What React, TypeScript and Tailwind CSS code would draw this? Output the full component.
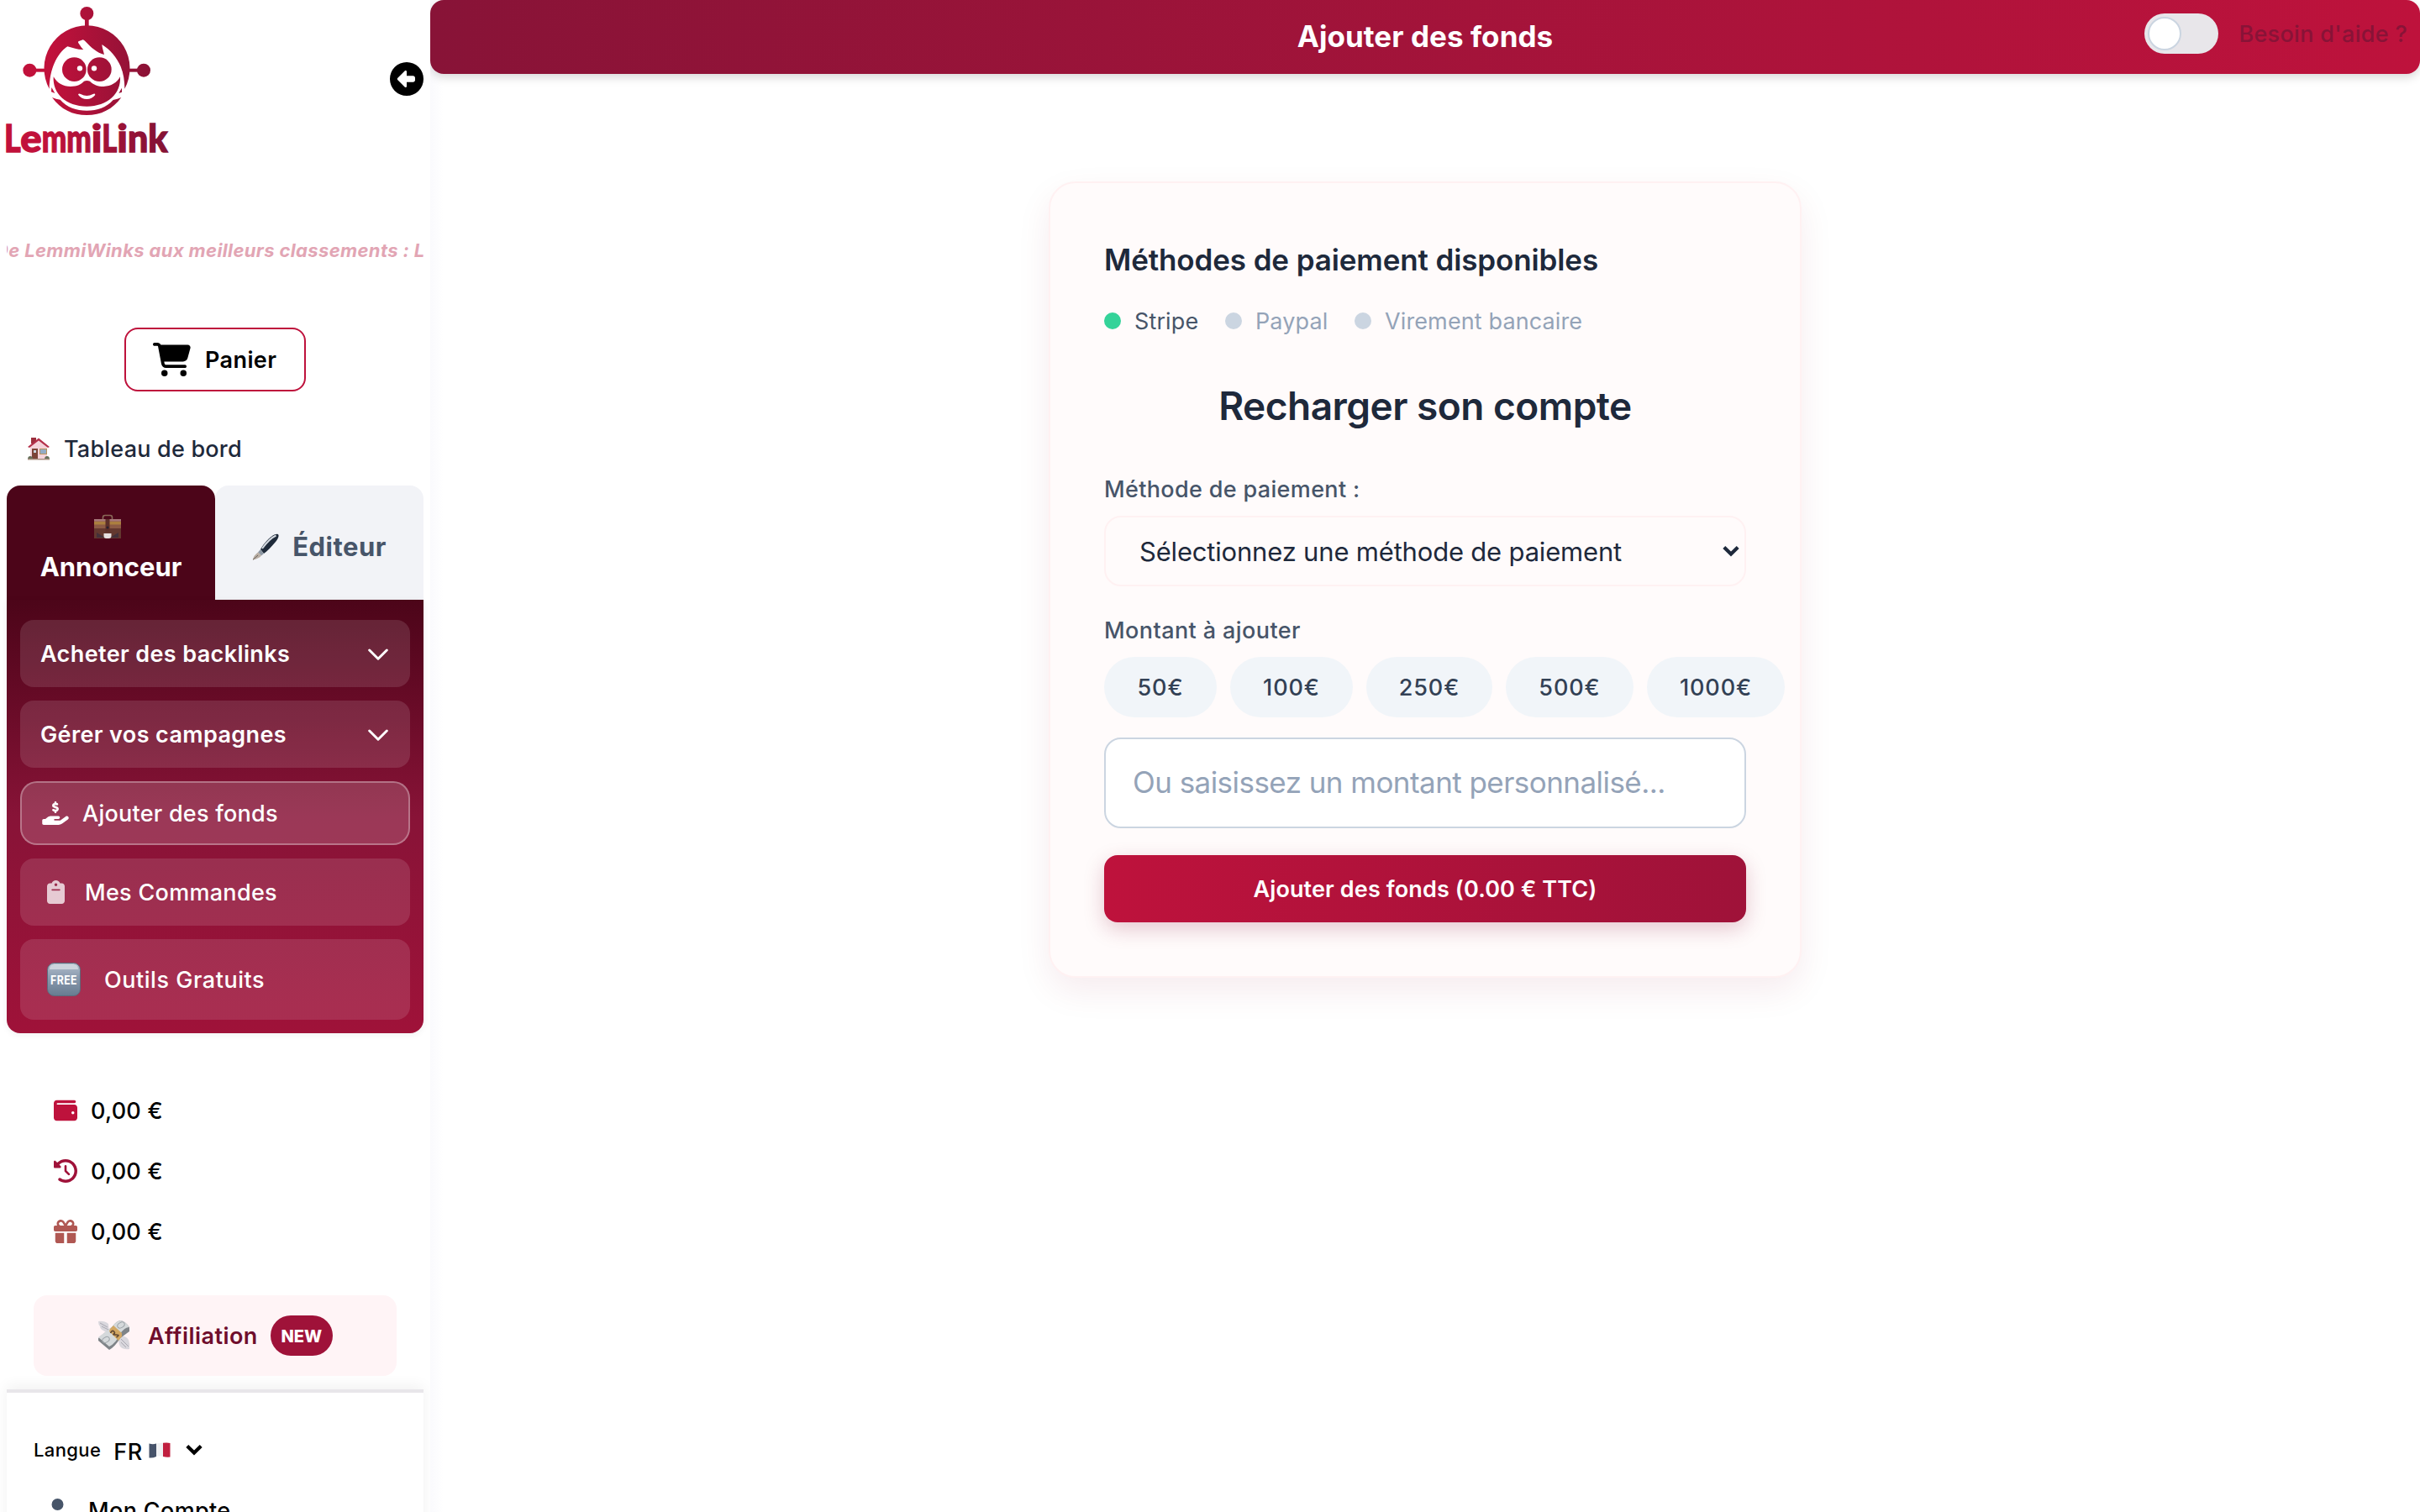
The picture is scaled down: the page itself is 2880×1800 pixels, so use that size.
import React, { ReactNode, useState } from 'react';
import {
  FaCartShopping,
  FaCircleLeft,
  FaClipboard,
  FaClockRotateLeft,
  FaGift,
  FaHandHoldingDollar,
  FaUser,
  FaWallet,
} from 'react-icons/fa6';

const amounts = [
  { value: 50, width: 'w-[134px]' },
  { value: 100, width: 'w-[146px]' },
  { value: 250, width: 'w-[150px]' },
  { value: 500, width: 'w-[152px]' },
  { value: 1000, width: 'w-[164px]' },
];

// lettres du logo : texte, position x, largeur
const wordmark: [string, number, number][] = [
  ['L', 15, 59],
  ['e', 73, 76],
  ['mm', 149, 177],
  ['i', 326, 38],
  ['L', 364, 54],
  ['i', 418, 38],
  ['n', 456, 73],
  ['k', 529, 70],
];

function Logo() {
  return (
    <svg className="h-44 w-48 shrink-0 overflow-visible" viewBox="24 24 576 528">
      <defs>
        <linearGradient id="brand" gradientUnits="userSpaceOnUse" x1="180" y1="0" x2="560" y2="0">
          <stop offset="0" stopColor="#c1113b" />
          <stop offset="1" stopColor="#861235" />
        </linearGradient>
      </defs>
      <g fill="url(#brand)">
        {/* antennes */}
        <circle cx="310" cy="48" r="24" />
        <path d="M303 66h14v34h-14z" />
        <circle cx="106" cy="251" r="24" />
        <path d="M126 245h34v12h-34z" />
        <circle cx="513" cy="251" r="24" />
        <path d="M460 245h34v12h-34z" />
        {/* casque et mèche */}
        <path d="M176 317A153 153 0 1 1 445 317C445 290 441 262 431 238C417 205 393 177 364 159C365 171 369 182 372 195C346 189 326 170 304 147Q298 140 292 143L280 148Q277 151 281 155C287 163 291 171 298 177C280 178 261 172 241 166C201 193 177 250 176 317Z" />
        {/* yeux */}
        <circle cx="265" cy="248" r="43" />
        <circle cx="355" cy="248" r="43" />
        {/* visage */}
        <path d="M191 274C205 298 225 309 252 309C276 308 290 301 300 290Q310 286 321 290C333 302 350 309 370 309C397 308 418 295 429 274C433 335 384 380 310 380C236 380 187 335 191 274Z" />
        <path d="M184 312L196 333L183 328Z" />
        <path d="M435 314L424 333L435 329Z" />
        <path d="M186 348Q200 354 215 356C240 384 272 395 310 395C349 395 379 384 404 357Q420 354 433 348C402 391 360 411 310 411C259 411 217 391 186 348Z" />
      </g>
      <g fill="#fff">
        <circle cx="285" cy="244" r="9.5" />
        <circle cx="336" cy="244" r="9.5" />
        <path d="M279 338Q281 332 288 336Q310 348 332 336Q339 332 340 339Q328 354 310 354Q291 354 279 338Z" />
      </g>
      <g fill="url(#brand)" stroke="url(#brand)" strokeWidth="4" fontSize="135" fontWeight="900" className="font-[Lato,sans-serif]">
        {wordmark.map(([text, x, width]) => (
          <text key={x} x={x} y="543" textLength={width} lengthAdjust="spacingAndGlyphs">
            {text}
          </text>
        ))}
      </g>
    </svg>
  );
}

function HouseIcon() {
  return (
    <svg className="h-7 w-7" viewBox="0 0 28 28">
      <path d="M5 1h6v7H5z" fill="#9c2f3d" />
      <path d="M4 11L14 2l10 9v15H4z" fill="#f4d3da" />
      <path d="M1 12L14 1.500 27 12l-2 1L14 4.500 3 13z" fill="#b4304a" />
      <path d="M6 14h7v12H6z" fill="#7c4438" />
      <path d="M8 16h3v3H8z" fill="#c9d4dd" />
      <path d="M15 14h9v7h-9z" fill="#b9945c" />
      <path d="M16 15h7v5h-7z" fill="#93acc6" />
      <path d="M1 27q0-4 3-4t3 4zM21 27q0-4 3-4t3 4z" fill="#66705a" />
      <path d="M1 26h26v1.500H1z" fill="#a88f80" />
    </svg>
  );
}

function BriefcaseIcon() {
  return (
    <svg className="h-8 w-8" viewBox="0 0 32 32">
      <path d="M10.500 6.500V4q0-2.500 2.500-2.500h6q2.500 0 2.500 2.500v2.500" fill="none" stroke="#8a6a58" strokeWidth="1.600" />
      <path d="M0 6h32v23H0z" fill="#63382f" />
      <path d="M0 6h32v11H0z" fill="#8c5b45" />
      <path d="M0 6h32v2.500H0z" fill="#a8797a" />
      <path d="M0 9h32v3.500H0z" fill="#ab7f3f" />
      <path d="M13.500 6h5v15h-5z" fill="#5c2f29" />
      <path d="M3 22l10 6H3zM29 22l-10 6h10z" fill="#43303a" />
      <path d="M11.500 23h9v3q0 3-3 3h-3q-3 0-3-3z" fill="#e6e0e0" />
      <circle cx="16" cy="16" r="1.500" fill="#2a2230" />
    </svg>
  );
}

function PenIcon() {
  return (
    <svg className="h-8 w-8" viewBox="0 0 32 32">
      <path d="M10 19C14 12 21 4 27 1.300Q31 0 31.500 2Q32 5 28 10C23 16 18 21 14 24Z" fill="#1f2a3a" />
      <path d="M12 18C17 11 23 5 28.500 2.500" fill="none" stroke="#d5dae1" strokeWidth="2" />
      <path d="M10 19l4 5-3 2.500-4-4z" fill="#8d97a3" />
      <path d="M7 22.500l4 4Q8 30 .8 31.500Q2 26 7 22.500Z" fill="#b9aea4" />
      <path d="M1 31.300L7 26" stroke="#6b625c" strokeWidth="1" />
    </svg>
  );
}

function FreeIcon() {
  return (
    <svg className="h-10 w-10" viewBox="0 0 40 40">
      <defs>
        <linearGradient id="free" x1="0" y1="0" x2="0" y2="1">
          <stop offset="0" stopColor="#b4bfcc" />
          <stop offset=".4" stopColor="#8d9db1" />
          <stop offset="1" stopColor="#677b90" />
        </linearGradient>
      </defs>
      <rect x=".5" y=".5" width="39" height="39" rx="8" fill="url(#free)" stroke="#5b6b7c" />
      <path d="M3 8q0-6 6-6h22q6 0 6 6z" fill="#ccd4dd" />
      <text x="4" y="25.500" textLength="32" lengthAdjust="spacingAndGlyphs" fontSize="15" fontWeight="700" fill="#fff" className="font-[Inter,sans-serif]">
        FREE
      </text>
    </svg>
  );
}

function MoneyIcon() {
  return (
    <svg className="h-10 w-10" viewBox="0 0 40 40">
      <path d="M1 3q7-1 12 3l1 9q-4 2-7-1-4-2-4-5-2-2-2-6z" fill="#d9d7dd" />
      <path d="M3 5l9 5M5 9l8 4" stroke="#aaa8b2" strokeWidth="1" />
      <path d="M26 20q8 0 11 5 2 5 1 11-7 1-11-3-3-5-1-13z" fill="#d9d7dd" />
      <path d="M28 24l9 9M28 28l6 6" stroke="#aaa8b2" strokeWidth="1" />
      <path d="M1 23L18 9Q23 2 28 2q5 1 10 8v5L27 23Q21 33 14 37L1 26z" fill="#7f8488" />
      <path d="M1 22L18 9Q23 2 28 2q5 1 10 8-6 0-11 8-5 11-13 15z" fill="#d5d9db" />
      <ellipse cx="28" cy="7.500" rx="4.500" ry="3" fill="none" stroke="#9da3a8" transform="rotate(-30 28 7.500)" />
      <ellipse cx="10" cy="25" rx="4.500" ry="3" fill="none" stroke="#9da3a8" transform="rotate(-30 10 25)" />
      <path d="M15 12l4-4 10 9v4l-4 5-11-11z" fill="#d2a763" />
      <path d="M15.500 17q2-4 4-2t0 3 3 1 0 3" fill="none" stroke="#5f4632" strokeWidth="1.600" />
    </svg>
  );
}

function FlagIcon() {
  return (
    <svg className="h-[19px] w-[26px]" viewBox="0 0 26 19">
      <path d="M.5 1.500Q5 3 9 1.500V17Q5 19 .5 18.500Z" fill="#46536a" />
      <path d="M9 1.500Q13 .5 17 .8V17Q13 15.500 9 17Z" fill="#f0f1f3" />
      <path d="M17 .8Q22 0 25.500 1V17.500Q21 18 17 17Z" fill="#c01f3f" />
    </svg>
  );
}

function Chevron() {
  return (
    <svg className="h-4 w-6" viewBox="0 0 24 16" fill="none" stroke="#fff" strokeWidth="3" strokeLinecap="round" strokeLinejoin="round">
      <path d="M1.700 3L12 13.200 22.300 3" />
    </svg>
  );
}

function SelectArrow() {
  return (
    <svg className="h-3.5 w-5" viewBox="0 0 20 14" fill="none" stroke="currentColor" strokeWidth="4.200">
      <path d="M1.800 2.500L10 10.500 18.200 2.500" />
    </svg>
  );
}

function Balance({ icon }: { icon: ReactNode }) {
  return (
    <div className="flex h-[72px] items-center gap-4 pl-14 text-[27px] font-medium tracking-[0.25px] text-black">
      {icon}
      <span className="pt-0.5">0,00 €</span>
    </div>
  );
}

function Sidebar() {
  return (
    <aside className="relative flex h-full w-[512px] shrink-0 flex-col overflow-hidden bg-white px-2 pt-2">
      <div className="flex shrink-0 justify-between">
        <Logo />
        <FaCircleLeft className="mt-[66px] h-10 w-10 text-black" />
      </div>

      <div className="mt-[98px] h-8 shrink-0 overflow-hidden whitespace-nowrap">
        <p className="-ml-3.5 text-[22px] leading-8 font-bold tracking-[0.37px] text-[#e2a5b4] italic">
          De LemmiWinks aux meilleurs classements : L
        </p>
      </div>

      <button className="mt-[76px] flex h-[76px] w-[216px] shrink-0 items-center gap-4 self-center rounded-2xl border-2 border-[#be123c] pl-8 text-[27px] font-semibold tracking-[0.4px] text-black">
        <FaCartShopping className="h-10 w-[45px]" />
        <span className="pt-0.5 pl-px">Panier</span>
      </button>

      <a className="mt-10 flex h-14 shrink-0 items-center gap-4 pl-6 text-[27px] font-medium tracking-[0.21px] text-[#1e293b]">
        <HouseIcon />
        <span className="pt-0.5">Tableau de bord</span>
      </a>

      <div className="mt-4 flex h-[136px] shrink-0 bg-white text-[31px] leading-[48px] font-bold">
        <button className="flex flex-1 flex-col items-center justify-center rounded-t-2xl bg-[#4c0519] pt-[10px] text-white">
          <span className="flex h-12 items-center pt-0.5 pr-2">
            <BriefcaseIcon />
          </span>
          Annonceur
        </button>
        <button className="flex flex-1 items-center justify-center gap-4 rounded-t-2xl bg-[#f2f3f7] pt-[9px] tracking-[0.5px] text-[#475569]">
          <PenIcon />
          Éditeur
        </button>
      </div>

      <nav className="flex shrink-0 flex-col gap-4 rounded-b-2xl bg-linear-to-b from-[#4c0519] via-[#881337] to-[#9f1239] px-4 pt-6 pb-4 text-[27px] text-white shadow-[0_2px_8px_rgba(0,0,0,0.06)]">
        <button className="flex h-20 items-center justify-between rounded-2xl bg-white/12 pt-0.5 pr-[26px] pl-6 font-semibold tracking-[0.38px]">
          Acheter des backlinks
          <Chevron />
        </button>
        <button className="flex h-20 items-center justify-between rounded-2xl bg-white/12 pt-0.5 pr-[26px] pl-6 font-semibold tracking-[0.38px]">
          Gérer vos campagnes
          <Chevron />
        </button>
        <a className="flex h-[76px] items-center gap-4 rounded-[20px] border-2 border-white/30 bg-white/16 pl-6 font-medium tracking-[0.25px]">
          <FaHandHoldingDollar className="h-7 w-8" />
          <span className="pt-0.5">Ajouter des fonds</span>
        </a>
        <a className="flex h-20 items-center gap-6 rounded-2xl bg-white/12 pl-8 font-medium tracking-[0.3px]">
          <FaClipboard className="h-7 w-[21px] text-white/75" />
          <span className="pt-0.5">Mes Commandes</span>
        </a>
        <a className="flex h-24 items-center gap-7 rounded-2xl bg-white/12 pl-8 font-medium tracking-[0.54px]">
          <FreeIcon />
          <span className="pt-0.5">Outils Gratuits</span>
        </a>
      </nav>

      <div className="mt-14 flex shrink-0 flex-col">
        <Balance icon={<FaWallet className="h-7 w-7 text-[#be123c]" />} />
        <Balance icon={<FaClockRotateLeft className="h-7 w-7 text-[#9f1239]" />} />
        <Balance icon={<FaGift className="h-7 w-7 text-[#b05853]" />} />
      </div>

      <a className="mx-8 mt-10 flex h-24 shrink-0 items-center rounded-2xl bg-[#fff4f6] pl-[76px] text-[27px] font-semibold tracking-[0.46px] text-[#6f0d2c]">
        <MoneyIcon />
        <span className="ml-5 pt-0.5">Affiliation</span>
        <span className="ml-[15px] flex h-12 w-[74px] items-center justify-center rounded-full bg-[#9f1239] pt-0.5 text-[20px] font-extrabold tracking-normal text-white">
          NEW
        </span>
      </a>

      <div className="mt-4 shrink-0 border-t-4 border-[#e8e6ea] bg-white pt-10 shadow-[0_-4px_16px_rgba(0,0,0,0.06)]">
        <div className="flex h-14 items-center pl-8 font-medium text-black">
          <span className="text-[22px] tracking-[0.39px]">Langue</span>
          <button className="ml-[15px] flex items-center pt-1.5 text-[27px] tracking-[0.6px]">
            FR
            <span className="ml-[7px] pb-1.5">
              <FlagIcon />
            </span>
            <span className="ml-[18px] pb-1.5">
              <SelectArrow />
            </span>
          </button>
        </div>
        <a className="mt-4 flex h-14 items-center gap-6 pl-12 text-[27px] font-medium tracking-[0.36px] text-black">
          <FaUser className="h-7 w-[25px] text-[#475569]" />
          <span className="pt-0.5">Mon Compte</span>
        </a>
      </div>
    </aside>
  );
}

function Method({ label, active, className }: { label: string; active?: boolean; className?: string }) {
  return (
    <span className={`flex items-center gap-4 whitespace-nowrap ${className || ''} ${active ? 'text-[#475569]' : 'text-[#94a3b8]'}`}>
      <span className={`h-5 w-5 shrink-0 rounded-full ${active ? 'bg-[#34d399]' : 'bg-[#cbd5e1]'}`} />
      <span className="pt-0.5">{label}</span>
    </span>
  );
}

export default function App() {
  const [amount, setAmount] = useState('');
  const total = (parseFloat(amount) || 0).toFixed(2);

  return (
    <div className="flex h-[1800px] w-[2880px] overflow-hidden bg-white font-[Inter,sans-serif]">
      <Sidebar />

      <main className="flex min-w-0 flex-1 flex-col items-center bg-linear-to-r from-[#fafafd] to-white to-[16px]">
        <header className="grid h-[88px] w-full grid-cols-[1fr_auto_1fr] rounded-2xl bg-linear-to-r from-[#881337] to-[#be123c] shadow-[0_4px_12px_rgba(0,0,0,0.16)]">
          <span />
          <h1 className="flex h-[86px] items-center text-[35px] font-bold tracking-[0.05px] text-white">
            Ajouter des fonds
          </h1>
          <div className="flex h-20 items-center justify-end gap-6 pr-[15px]">
            <span className="flex h-12 w-[88px] items-center rounded-full bg-[#e8e6ea] px-1">
              <span className="h-10 w-10 rounded-full border-2 border-[#cbd5e1] bg-white" />
            </span>
            <span className="pt-0.5 text-[27px] font-medium tracking-[0.31px] text-[#881337]">Besoin d'aide ?</span>
          </div>
        </header>

        <section className="mt-32 flex w-[896px] flex-col rounded-[32px] border-2 border-[#fff1f2] bg-[#fffbfb] p-16 shadow-[0_16px_40px_rgba(136,19,55,0.08)]">
          <h2 className="text-[35px] leading-[54px] font-semibold tracking-[-0.12px] text-[#1e293b]">
            Méthodes de paiement disponibles
          </h2>

          <div className="mt-[26px] flex h-10 items-center text-[27px] tracking-[0.12px]">
            <Method label="Stripe" active className="w-36" />
            <Method label="Paypal" className="w-[154px]" />
            <Method label="Virement bancaire" />
          </div>

          <h3 className="mt-[52px] text-center text-[46px] leading-[58px] font-semibold tracking-[-0.52px] text-[#1e293b]">
            Recharger son compte
          </h3>

          <label className="mt-[51px] text-[27px] leading-10 font-medium tracking-[0.34px] text-[#475569]">
            Méthode de paiement :
          </label>
          <button className="mt-[11px] flex h-[84px] items-center justify-between rounded-[20px] border-2 border-[#fff1f2] pr-[6px] pl-10 text-[31px] tracking-[-0.19px] text-[#1e293b]">
            <span className="pt-0.5">Sélectionnez une méthode de paiement</span>
            <SelectArrow />
          </button>

          <label className="mt-[33px] text-[27px] leading-10 font-medium tracking-[0.41px] text-[#475569]">
            Montant à ajouter
          </label>
          <div className="mt-[11px] flex gap-4">
            {amounts.map(({ value, width }) => (
              <button
                key={value}
                onClick={() => setAmount(String(value))}
                className={`h-[72px] shrink-0 rounded-full bg-[#f1f5f9] pt-0.5 text-[27px] font-medium tracking-[0.9px] text-[#334155] ${width}`}
              >
                {value}€
              </button>
            ))}
          </div>

          <input
            value={amount}
            onChange={(e) => setAmount(e.target.value)}
            placeholder="Ou saisissez un montant personnalisé..."
            className="mt-6 h-[108px] rounded-[20px] border-2 border-[#cbd5e1] bg-white px-8 pb-0.5 text-[35px] tracking-[-0.55px] text-[#1e293b] placeholder:text-[#94a3b8]"
          />

          <button className="mt-8 h-20 rounded-2xl bg-linear-to-r from-[#be123c] to-[#9f1239] pt-0.5 text-[27px] font-semibold tracking-[0.12px] text-white shadow-[0_8px_24px_rgba(136,19,55,0.22)]">
            Ajouter des fonds ({total} € TTC)
          </button>
        </section>
      </main>
    </div>
  );
}
